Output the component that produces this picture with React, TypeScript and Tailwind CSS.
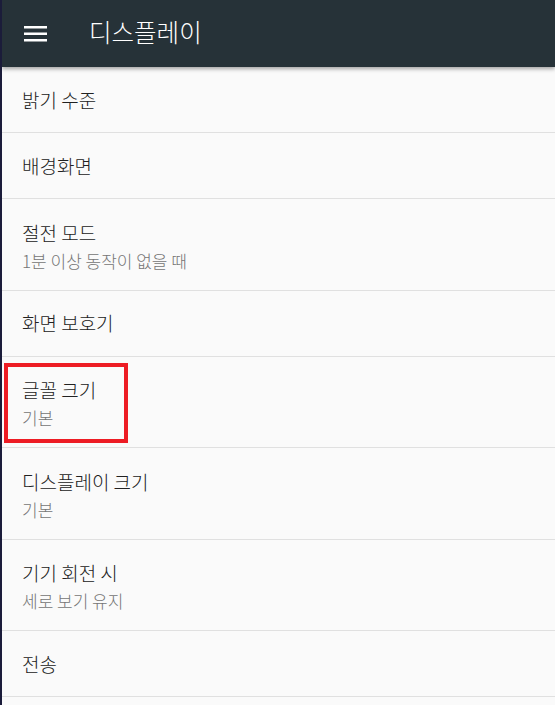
const FONT = { fontFamily: '"Noto Sans CJK KR", "Noto Sans", Roboto, sans-serif' };

const ITEMS = [
  { id: 1, title: "밝기 수준" },
  { id: 2, title: "배경화면" },
  { id: 3, title: "절전 모드", summary: "1분 이상 동작이 없을 때" },
  { id: 4, title: "화면 보호기" },
  { id: 5, title: "글꼴 크기", summary: "기본", highlight: true },
  { id: 6, title: "디스플레이 크기", summary: "기본" },
  { id: 7, title: "기기 회전 시", summary: "세로 보기 유지" },
  { id: 8, title: "전송" },
];

function MenuIcon() {
  return (
    <svg width="23" height="18" viewBox="0 0 23 18" className="block">
      <rect x="0" y="2" width="23" height="2.5" fill="#ffffff" />
      <rect x="0" y="8.5" width="23" height="2.5" fill="#ffffff" />
      <rect x="0" y="15" width="23" height="2.5" fill="#ffffff" />
    </svg>
  );
}

export default function App() {
  return (
    <div style={FONT} className="w-[555px] h-[705px] bg-[#fafafa] border-l-2 border-[#1b1c3a] overflow-hidden">
      {/* Toolbar */}
      <div className="relative z-10 h-[67px] bg-[#263238] flex items-center shadow-[0_2px_4px_rgba(0,0,0,0.35)]">
        <div className="pl-[22px] pr-[42px] -mt-[1px]">
          <MenuIcon />
        </div>
        <h1 className="text-[24.5px] font-light text-white leading-none -mt-[2px]">디스플레이</h1>
      </div>

      {/* Preference list */}
      <div>
        {ITEMS.map((item) => (
          <div
            key={item.id}
            className={
              "relative flex flex-col justify-center px-5 border-b border-[#e0e0e0] " +
              (item.summary ? "h-[91.5px] pt-1" : "h-[66px]")
            }
          >
            <p className="text-[19px] font-light leading-[28px] text-[#212121]">{item.title}</p>
            {item.summary && (
              <p className="text-[17px] font-light leading-[27px] text-[#757575]">{item.summary}</p>
            )}
            {item.highlight && (
              <div className="absolute left-[2px] top-[6px] w-[124px] h-[80px] border-4 border-[#ed1c24]" />
            )}
          </div>
        ))}
      </div>
    </div>
  );
}
